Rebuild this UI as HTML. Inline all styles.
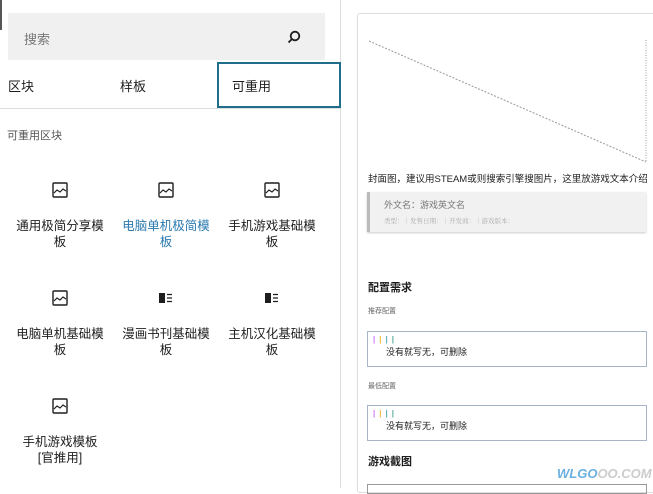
<!DOCTYPE html>
<html><head><meta charset="utf-8"><style>
*{margin:0;padding:0;box-sizing:border-box}
body{width:653px;height:488px;overflow:hidden;background:#fff;font-family:"Liberation Sans","Noto Sans CJK SC",sans-serif;position:relative;color:#1e1e1e}
.a{position:absolute}
.item{position:absolute;width:100px;text-align:center;font-size:12.5px;line-height:16px}
.item svg{display:block;margin:0 auto 19px}
.sm{font-family:"Liberation Serif","Noto Serif CJK SC",serif}
</style></head><body>
<div class="a" style="left:0;top:0;width:341px;height:488px;border-right:1px solid #ddd"></div>
<div class="a" style="left:0;top:0;width:2px;height:30px;background:#555"></div>
<div class="a" style="left:8px;top:13px;width:317px;height:47px;background:#f0f0f0"></div>
<div class="a" style="left:24px;top:29px;font-size:13px;color:#777">搜索</div>
<svg class="a" style="left:286px;top:29px" width="16" height="16" viewBox="0 0 16 16"><circle cx="9" cy="7" r="4.3" fill="none" stroke="#1e1e1e" stroke-width="1.8"/><line x1="6" y1="10" x2="2.5" y2="13.5" stroke="#1e1e1e" stroke-width="1.8"/></svg>
<div class="a" style="left:0;top:108px;width:341px;height:1px;background:#ddd"></div>
<div class="a" style="left:8px;top:76px;font-size:13px">区块</div>
<div class="a" style="left:120px;top:76px;font-size:13px">样板</div>
<div class="a" style="left:217px;top:62px;width:124px;height:46px;border:2px solid #1f6e8c"></div>
<div class="a" style="left:232px;top:76px;font-size:13px">可重用</div>
<div class="a" style="left:7px;top:127px;font-size:11px;color:#555">可重用区块</div>

<div class="item" style="left:10px;top:181px"><svg width="18" height="18" viewBox="0 0 18 18"><rect x="2" y="2" width="14" height="14" rx="1" fill="none" stroke="#1e1e1e" stroke-width="1.4"/><path d="M3 12 L6 9 L9 11 L12 8 L15 10" fill="none" stroke="#1e1e1e" stroke-width="1.2"/></svg>通用极简分享模<br>板</div>
<div class="item" style="left:116px;top:181px;color:#2a7ab0"><svg width="18" height="18" viewBox="0 0 18 18"><rect x="2" y="2" width="14" height="14" rx="1" fill="none" stroke="#1e1e1e" stroke-width="1.4"/><path d="M3 12 L6 9 L9 11 L12 8 L15 10" fill="none" stroke="#1e1e1e" stroke-width="1.2"/></svg>电脑单机极简模<br>板</div>
<div class="item" style="left:222px;top:181px"><svg width="18" height="18" viewBox="0 0 18 18"><rect x="2" y="2" width="14" height="14" rx="1" fill="none" stroke="#1e1e1e" stroke-width="1.4"/><path d="M3 12 L6 9 L9 11 L12 8 L15 10" fill="none" stroke="#1e1e1e" stroke-width="1.2"/></svg>手机游戏基础模<br>板</div>
<div class="item" style="left:10px;top:289px"><svg width="18" height="18" viewBox="0 0 18 18"><rect x="2" y="2" width="14" height="14" rx="1" fill="none" stroke="#1e1e1e" stroke-width="1.4"/><path d="M3 12 L6 9 L9 11 L12 8 L15 10" fill="none" stroke="#1e1e1e" stroke-width="1.2"/></svg>电脑单机基础模<br>板</div>
<div class="item" style="left:116px;top:289px"><svg width="18" height="18" viewBox="0 0 18 18"><rect x="2" y="4" width="6" height="10" fill="#1e1e1e"/><path d="M10 5.5h5M10 9h5M10 12.5h5" stroke="#1e1e1e" stroke-width="1.3"/></svg>漫画书刊基础模<br>板</div>
<div class="item" style="left:222px;top:289px"><svg width="18" height="18" viewBox="0 0 18 18"><rect x="2" y="4" width="6" height="10" fill="#1e1e1e"/><path d="M10 5.5h5M10 9h5M10 12.5h5" stroke="#1e1e1e" stroke-width="1.3"/></svg>主机汉化基础模<br>板</div>
<div class="item" style="left:10px;top:397px"><svg width="18" height="18" viewBox="0 0 18 18"><rect x="2" y="2" width="14" height="14" rx="1" fill="none" stroke="#1e1e1e" stroke-width="1.4"/><path d="M3 12 L6 9 L9 11 L12 8 L15 10" fill="none" stroke="#1e1e1e" stroke-width="1.2"/></svg>手机游戏模板<br>[官推用]</div>

<div class="a" style="left:357px;top:13px;width:300px;height:480px;border:1px solid #ddd;border-radius:3px"></div>
<svg class="a" style="left:360px;top:35px" width="293" height="135"><line x1="9" y1="6" x2="286" y2="127" stroke="#999" stroke-dasharray="2,1.5"/><line x1="286" y1="5" x2="286" y2="127" stroke="#999" stroke-dasharray="1,1.5"/></svg>
<div class="a" style="left:368px;top:171px;font-size:9.5px;white-space:nowrap">封面图，建议用STEAM或则搜索引擎搜图片，这里放游戏文本介绍</div>
<div class="a" style="left:367px;top:192px;width:279px;height:40px;background:#f1f1f1;border-left:3px solid #bbb;box-shadow:0 1px 2px #ccc"></div>
<div class="a" style="left:384px;top:198px;font-size:9px;color:#777">外文名：游戏英文名</div>
<div class="a sm" style="left:384px;top:216px;font-size:6.5px;color:#aaa">类型：｜发售日期：｜开发商：｜游戏版本：</div>
<div class="a" style="left:368px;top:279px;font-size:11px;font-weight:bold">配置需求</div>
<div class="a" style="left:368px;top:306px;font-size:7px;color:#666">推荐配置</div>
<div class="a" style="left:367px;top:331px;width:280px;height:36px;border:1px solid #a8b4c8"></div>
<div class="a" style="left:373px;top:335px;font-size:8px;letter-spacing:4px;font-weight:bold"><span style="color:#c7f">|</span><span style="color:#eb3">|</span><span style="color:#5ab">|</span><span style="color:#5a9">|</span></div>
<div class="a" style="left:386px;top:345px;font-size:9px">没有就写无，可删除</div>
<div class="a" style="left:368px;top:381px;font-size:7px;color:#666">最低配置</div>
<div class="a" style="left:367px;top:405px;width:280px;height:36px;border:1px solid #a8b4c8"></div>
<div class="a" style="left:373px;top:409px;font-size:8px;letter-spacing:4px;font-weight:bold"><span style="color:#c7f">|</span><span style="color:#eb3">|</span><span style="color:#5ab">|</span><span style="color:#5a9">|</span></div>
<div class="a" style="left:386px;top:419px;font-size:9px">没有就写无，可删除</div>
<div class="a" style="left:368px;top:453px;font-size:11px;font-weight:bold">游戏截图</div>
<div class="a" style="left:367px;top:484px;width:280px;height:10px;border:1px solid #999"></div>
<div class="a" style="left:557px;top:466px;font-size:13px;font-weight:bold;color:#6ab0e0;font-style:italic">WLGO<span style="color:#ccc">OO.COM</span></div>
</body></html>
